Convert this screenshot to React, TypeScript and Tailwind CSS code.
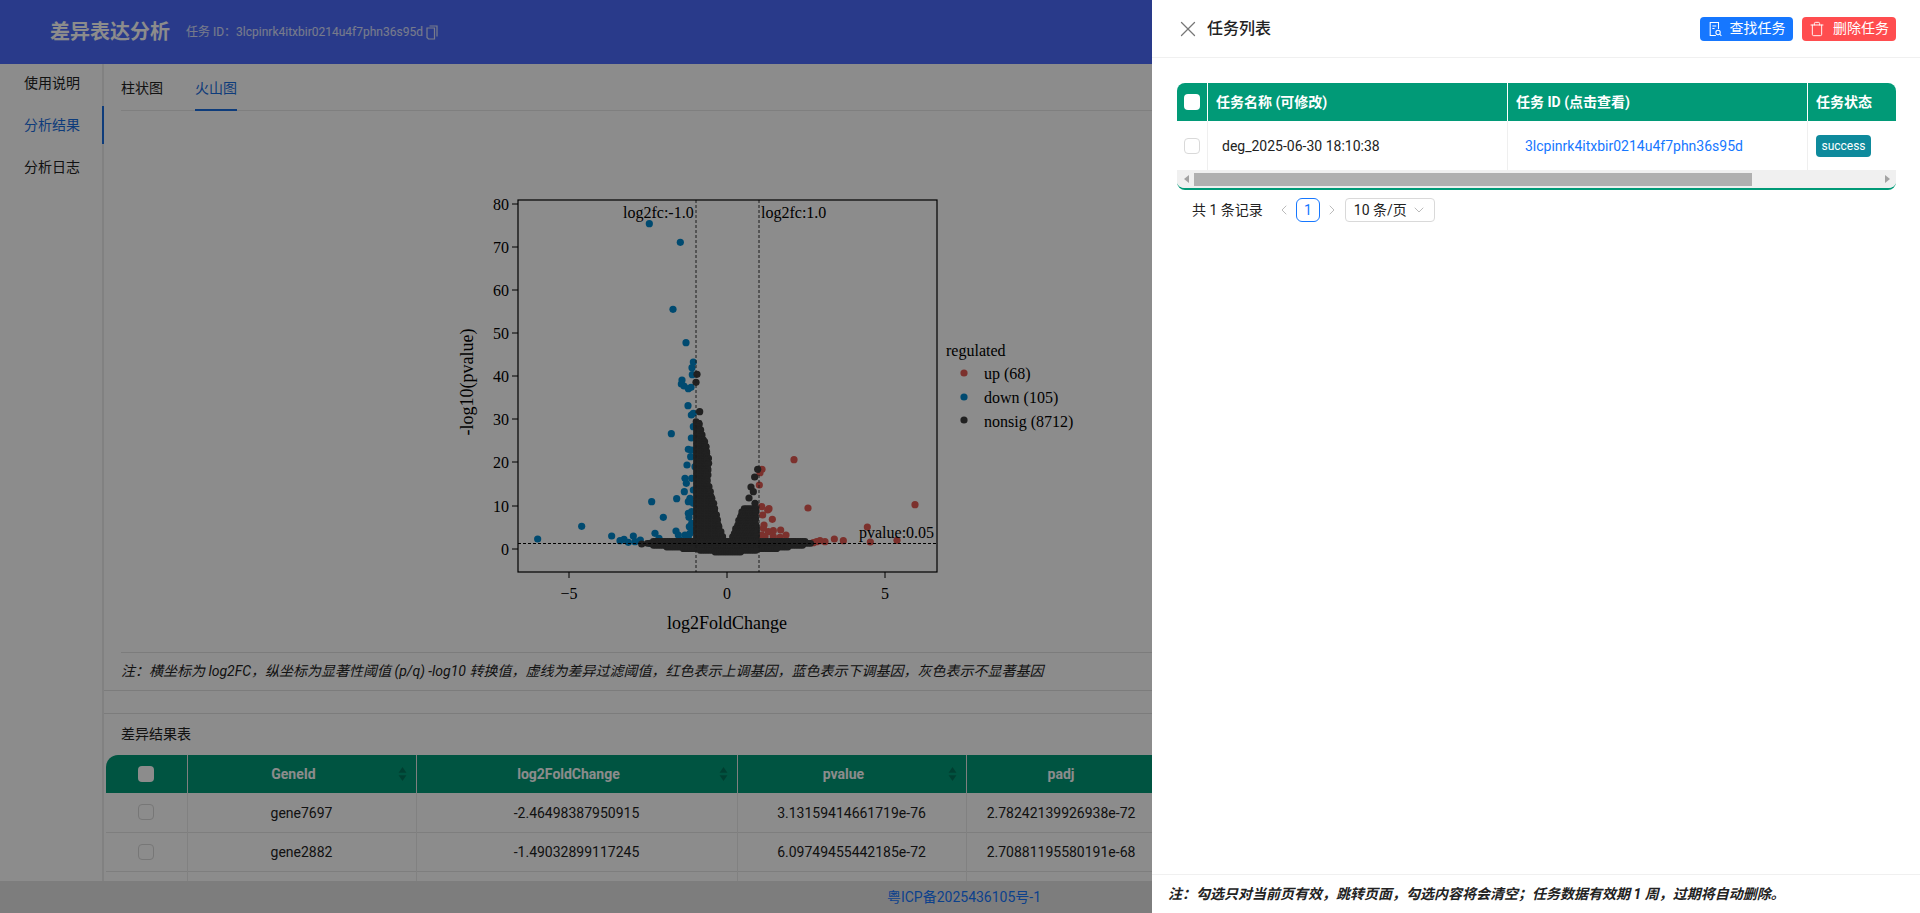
import { X, ChevronLeft, ChevronRight, ChevronDown, Trash } from 'lucide-react';

const FONT = "font-['Roboto','Noto_Sans_CJK_SC',sans-serif]";

// zoom-crop coordinates of the scattered points: x = 440 + zx / 3, y = 400 + zy / 3
const BLUE = [
  [628, -529], [721, -473], [699, -272], [738, -172], [760, -114], [756, -97], [757, -76], [726, -60], [724, -48], [732, -42], [745, -34], [753, -38], [744, 17], [754, 45], [760, 40],
  [694, 101], [760, 80], [754, 114], [745, 148], [755, 150], [752, 170], [741, 195], [765, 200], [735, 235], [755, 235], [739, 250], [733, 275], [760, 270], [750, 295], [745, 305], [635, 305],
  [710, 296], [760, 310], [745, 340], [755, 335], [747, 352], [670, 352], [425, 379], [293, 417], [515, 408], [540, 422], [552, 418], [565, 427], [580, 408], [585, 425], [601, 420], [645, 400],
  [657, 415], [630, 430], [708, 393], [715, 405], [690, 430], [720, 420], [748, 380], [735, 405], [745, 410], [755, 370], [760, 390], [700, 428], [660, 430], [670, 430], [740, 425], [750, 400],
];
const RED = [
  [1062, 179], [966, 208], [960, 218], [958, 255], [1104, 324], [1425, 314], [965, 320], [987, 326], [983, 330], [968, 345], [997, 358], [972, 375], [1022, 390], [1000, 392], [985, 395], [970, 385],
  [1038, 405], [975, 410], [1000, 410], [1020, 412], [1060, 425], [1070, 428], [1282, 381], [1183, 417], [1210, 422], [1291, 426], [1371, 421], [1155, 425], [1140, 422], [1120, 428], [1130, 425], [965, 405],
];
const GREY = [
  [771, -77], [768, -53], [779, 35], [953, 208], [944, 231], [933, 261], [927, 294], [940, 275], [945, 310], [605, 432],
];

// outline of the dense volcano, [zy, zx] pairs
const LEFT_LOBE_EDGE = [[65, 772], [100, 782], [125, 792], [150, 795], [180, 800], [240, 800], [270, 807], [320, 817], [360, 828], [400, 842], [430, 854]];
const RIGHT_LOBE_EDGE = [[326, 914], [345, 905], [370, 897], [400, 885], [430, 875]];
const BASE = [[424, 640, 1100], [430, 622, 1115], [436, 640, 1090], [441, 680, 1050], [446, 730, 1010], [451, 780, 950], [456, 825, 905]];

function edgeAt(table: number[][], zy: number) {
  for (let i = 1; i < table.length; i++) {
    const [y0, x0] = table[i - 1];
    const [y1, x1] = table[i];
    if (zy <= y1) return x0 + ((x1 - x0) * (zy - y0)) / (y1 - y0);
  }
  return table[table.length - 1][1];
}

function denseDots() {
  const out: number[][] = [];
  for (let zy = 65; zy <= 430; zy += 5) {
    const right = edgeAt(LEFT_LOBE_EDGE, zy) + 5 * Math.sin(zy * 0.37) + 2 * Math.sin(zy * 1.3);
    for (let zx = 770; zx <= right; zx += 7) out.push([zx, zy]);
    out.push([right, zy]);
  }
  for (let zy = 326; zy <= 430; zy += 5) {
    const left = edgeAt(RIGHT_LOBE_EDGE, zy) + 4 * Math.sin(zy * 0.5);
    out.push([left, zy]);
    for (let zx = left + 7; zx <= 950; zx += 7) out.push([zx, zy]);
  }
  for (const [zy, a, b] of BASE) {
    for (let zx = a; zx <= b; zx += 7) out.push([zx, zy]);
  }
  return out;
}

const toX = (zx: number) => 440 + zx / 3;
const toY = (zy: number) => 400 + zy / 3;

function Volcano() {
  const yTicks = [[80, 204], [70, 247], [60, 290], [50, 333], [40, 376], [30, 419], [20, 462], [10, 506], [0, 549]];
  const xTicks = [['−5', 569], ['0', 727], ['5', 885]] as const;
  return (
    <svg viewBox="440 180 660 460" className="w-[660px] h-[460px] block" fontFamily="'Liberation Serif', serif" fontSize="16" fill="#000">
      {BLUE.map(([x, y], i) => <circle key={i} cx={toX(x)} cy={toY(y)} r="3.6" fill="#0088cc" />)}
      {RED.map(([x, y], i) => <circle key={i} cx={toX(x)} cy={toY(y)} r="3.6" fill="#e25a52" />)}
      {GREY.map(([x, y], i) => <circle key={i} cx={toX(x)} cy={toY(y)} r="3.6" fill="#3c3c3c" />)}
      {denseDots().map(([x, y], i) => <circle key={i} cx={toX(x)} cy={toY(y)} r="3.4" fill="#3c3c3c" />)}

      <line x1="696" y1="200" x2="696" y2="572" stroke="#333" strokeDasharray="3 2" />
      <line x1="759" y1="200" x2="759" y2="572" stroke="#333" strokeDasharray="3 2" />
      <line x1="518" y1="543.5" x2="937" y2="543.5" stroke="#000" strokeDasharray="3 2" />
      <rect x="518" y="200" width="419" height="372" fill="none" stroke="#000" strokeWidth="1.2" />

      {yTicks.map(([v, y]) => (
        <g key={v}>
          <line x1="512" y1={y} x2="518" y2={y} stroke="#000" />
          <text x="509" y={y + 6} textAnchor="end">{v}</text>
        </g>
      ))}
      {xTicks.map(([v, x]) => (
        <g key={v}>
          <line x1={x} y1="572" x2={x} y2="578" stroke="#000" />
          <text x={x} y="599" textAnchor="middle">{v}</text>
        </g>
      ))}

      <text x="623" y="218">log2fc:-1.0</text>
      <text x="761" y="218">log2fc:1.0</text>
      <text x="859" y="538">pvalue:0.05</text>
      <text x="727" y="629" fontSize="18" textAnchor="middle">log2FoldChange</text>
      <text transform="translate(473 382) rotate(-90)" fontSize="18" textAnchor="middle">-log10(pvalue)</text>

      <text x="946" y="356">regulated</text>
      <circle cx="964" cy="373" r="3.6" fill="#e25a52" />
      <text x="984" y="379">up (68)</text>
      <circle cx="964" cy="397" r="3.6" fill="#0088cc" />
      <text x="984" y="403">down (105)</text>
      <circle cx="964" cy="420" r="3.6" fill="#3c3c3c" />
      <text x="984" y="427">nonsig (8712)</text>
    </svg>
  );
}

function SortIcon() {
  return (
    <svg viewBox="0 0 10 16" className="w-[9px] h-[14px] absolute right-[9px] top-[12px]" fill="#00745a">
      <path d="M5 0 9.5 6.5H.5z" />
      <path d="M5 16 .5 9.5h9z" />
    </svg>
  );
}

// document with a small magnifier at its lower right corner
function FindIcon() {
  return (
    <svg viewBox="0 0 16 18" className="w-[14px] h-4" fill="none" stroke="currentColor" strokeWidth="1.2">
      <path d="M9 16.5H2.5V1.5h9.5v7.5" />
      <path d="M5 5.5h4.5M5 8.5h2.5" />
      <circle cx="11.5" cy="13" r="2.5" />
      <path d="m13.5 15 1.8 1.8" />
    </svg>
  );
}

function CopyIcon() {
  return (
    <svg viewBox="0 0 12 15" className="ml-[3px] w-3 h-[15px]" fill="none" stroke="currentColor" strokeWidth="1.2">
      <path d="M3.5 1H11v10.5" />
      <path d="M1 3h7.5v11H2.5L1 12.5z" />
    </svg>
  );
}

const GENE_ROWS = [
  ['gene7697', '-2.46498387950915', '3.13159414661719e-76', '2.78242139926938e-72'],
  ['gene2882', '-1.49032899117245', '6.09749455442185e-72', '2.70881195580191e-68'],
  ['', '', '', ''],
];

function GeneTable() {
  const heads = ['GeneId', 'log2FoldChange', 'pvalue', 'padj'];
  return (
    <div className="ml-[2px] overflow-hidden rounded-tl-xl">
      <table className="table-fixed border-collapse text-[14px] text-[#222] w-[1300px]">
        <colgroup>
          <col className="w-[81px]" />
          <col className="w-[229px]" />
          <col className="w-[321px]" />
          <col className="w-[229px]" />
          <col className="w-[190px]" />
          <col />
        </colgroup>
        <thead>
          <tr className="h-[38px] bg-[#019a77] text-white">
            <th className="border-r border-[#e8e8e8]">
              <span className="block mx-auto w-4 h-4 bg-white rounded-[4px]" />
            </th>
            {heads.map(h => (
              <th key={h} className={`relative border-r border-[#e8e8e8] font-bold ${h === 'padj' ? '' : 'pr-4'}`}>
                {h}
                {h !== 'padj' && <SortIcon />}
              </th>
            ))}
            <th />
          </tr>
        </thead>
        <tbody>
          {GENE_ROWS.map((r, i) => (
            <tr key={i} className="h-[39px] border-b border-[#e5e5e5]">
              <td className="border-r border-[#ececec]">
                {r[0] && <span className="block mx-auto w-4 h-4 bg-white border border-[#d9d9d9] rounded-[4px]" />}
              </td>
              {r.map((c, j) => (
                <td key={j} className="border-r border-[#ececec] text-center pt-[2px]">{c}</td>
              ))}
              <td />
            </tr>
          ))}
        </tbody>
      </table>
    </div>
  );
}

function TaskTable() {
  return (
    <div className="rounded-lg overflow-hidden border-b-2 border-[#019a77]">
      <div className="flex h-[38px] bg-[#019a77] text-white text-[14px] font-bold items-center">
        <div className="w-[31px] h-full flex items-center justify-center border-r border-white shrink-0">
          <span className="w-4 h-4 bg-white rounded-[4px]" />
        </div>
        <div className="w-[300px] h-full flex items-center pl-2 border-r border-white shrink-0">任务名称 (可修改)</div>
        <div className="w-[300px] h-full flex items-center pl-2 border-r border-white shrink-0">任务 ID (点击查看)</div>
        <div className="flex-1 pl-2">任务状态</div>
      </div>
      <div className="flex h-[49px] text-[14px] text-[#222] items-center">
        <div className="w-[31px] h-full flex items-center justify-center border-r border-[#efefef] shrink-0">
          <span className="w-4 h-4 bg-white border border-[#d9d9d9] rounded-[4px]" />
        </div>
        <div className="w-[300px] h-full flex items-center pl-[14px] pt-[1px] border-r border-[#efefef] shrink-0">deg_2025-06-30 18:10:38</div>
        <div className="w-[300px] h-full flex items-center pl-[17px] pt-[1px] border-r border-[#efefef] shrink-0 text-[#1677ff]">3lcpinrk4itxbir0214u4f7phn36s95d</div>
        <div className="flex-1 pl-2">
          <span className="inline-flex w-[55px] h-[22px] items-center justify-center rounded bg-[#0e8a9c] text-white text-[12px]">success</span>
        </div>
      </div>
      <div className="flex h-[18px] bg-[#f0f0f0] items-center">
        <span className="w-[18px] flex justify-center">
          <span className="border-y-[4px] border-y-transparent border-r-[5px] border-r-[#a3a3a3]" />
        </span>
        <div className="ml-[-1px] w-[558px] h-[13px] bg-[#b0b0b0]" />
        <div className="flex-1" />
        <span className="w-[18px] flex justify-center">
          <span className="border-y-[4px] border-y-transparent border-l-[5px] border-l-[#a3a3a3]" />
        </span>
      </div>
    </div>
  );
}

const TASK_ID_LABEL = '任务 ID\uFF1A3lcpinrk4itxbir0214u4f7phn36s95d';
const CHART_NOTE = '注\uFF1A横坐标为 log2FC\uFF0C纵坐标为显著性阈值 (p/q) -log10 转换值\uFF0C虚线为差异过滤阈值\uFF0C红色表示上调基因\uFF0C蓝色表示下调基因\uFF0C灰色表示不显著基因';
const DRAWER_NOTE = '注\uFF1A勾选只对当前页有效\uFF0C跳转页面\uFF0C勾选内容将会清空\uFF1B任务数据有效期 1 周\uFF0C过期将自动删除\u3002';

export default function App() {
  return (
    <div className={`${FONT} relative h-screen overflow-hidden bg-white flex flex-col`}>
      {/* top bar */}
      <header className="h-[64px] shrink-0 bg-[#4c6bfb] flex items-center pl-[50px] text-white">
        <span className="text-[20px] font-bold">差异表达分析</span>
        <span className="ml-4 text-[12px] text-white/80">{TASK_ID_LABEL}</span>
        <span className="text-white/80"><CopyIcon /></span>
      </header>

      <div className="flex-1 flex min-h-0">
        {/* side nav */}
        <nav className="w-[104px] shrink-0 border-r-2 border-[#ececec] text-[14px] text-[#222]">
          <div className="h-[38px] flex items-center pl-6">使用说明</div>
          <div className="h-[38px] mt-[4px] flex items-center pl-6 text-[#1a6ee0] border-r-2 border-[#1a6ee0] -mr-[2px]">分析结果</div>
          <div className="h-[38px] mt-[4px] flex items-center pl-6">分析日志</div>
        </nav>

        <main className="flex-1 min-w-0">
          {/* tabs */}
          <div className="ml-[17px] h-[47px] border-b border-[#e8e8e8] flex text-[14px] text-[#222]">
            <div className="h-full flex items-center pt-[3px]">柱状图</div>
            <div className="h-[47px] ml-8 flex items-center pt-[3px] text-[#1a6ee0] border-b-2 border-[#1a6ee0]">火山图</div>
          </div>

          <div className="ml-[336px] mt-[69px]"><Volcano /></div>

          <div className="ml-[17px] mt-3 border-t border-[#e2e2e2] h-[38px] flex items-center text-[14px] italic text-[#222]">
            {CHART_NOTE}
          </div>
          <div className="border-t border-[#e2e2e2] h-[23px]" />
          <div className="border-t border-[#e2e2e2] h-[42px] flex items-center pl-[17px] text-[14px] text-[#222]">差异结果表</div>
          <GeneTable />
        </main>
      </div>

      <footer className="h-[32px] shrink-0 bg-[#e4e4e4] flex items-center justify-center text-[14px] text-[#1677ff] pl-2">
        粤ICP备2025436105号-1
      </footer>

      {/* modal mask */}
      <div className="absolute inset-0 bg-black/45" />

      {/* task drawer */}
      <aside className="absolute top-0 right-0 bottom-0 w-[768px] bg-white flex flex-col">
        <div className="h-[58px] shrink-0 border-b border-[#f0f0f0] flex items-center pl-[23px] pr-6">
          <X className="w-[26px] h-[26px] text-[#777]" strokeWidth={1.2} />
          <span className="ml-[6px] text-[16px] font-medium text-[#222]">任务列表</span>
          <div className="ml-auto flex gap-[9px]">
            <button className="w-[93px] h-[24px] rounded bg-[#1677ff] text-white text-[14px] flex items-center justify-center gap-2">
              <FindIcon />
              查找任务
            </button>
            <button className="w-[94px] h-[24px] rounded bg-[#ff4d4f] text-white text-[14px] flex items-center justify-center gap-2">
              <Trash className="w-4 h-4" strokeWidth={1.4} />
              删除任务
            </button>
          </div>
        </div>

        <div className="flex-1 pl-[25px] pr-6 pt-[25px]">
          <TaskTable />
          <div className="mt-2 h-6 flex items-center text-[14px] text-[#222]">
            <span className="ml-[15px]">共 1 条记录</span>
            <ChevronLeft className="ml-[13px] w-4 h-4 text-[#bbb]" strokeWidth={1.5} />
            <span className="ml-[4px] w-6 h-6 rounded-md border border-[#1677ff] text-[#1677ff] flex items-center justify-center">1</span>
            <ChevronRight className="ml-[4px] w-4 h-4 text-[#bbb]" strokeWidth={1.5} />
            <div className="ml-[5px] w-[90px] h-6 rounded border border-[#d9d9d9] flex items-center pl-2">
              10 条/页
              <ChevronDown className="ml-[4px] w-4 h-4 text-[#bbb]" strokeWidth={1.5} />
            </div>
          </div>
        </div>

        <div className="h-[39px] shrink-0 border-t border-[#f0f0f0] flex items-center pl-4 text-[14px] font-bold italic text-[#222]">
          {DRAWER_NOTE}
        </div>
      </aside>
    </div>
  );
}
